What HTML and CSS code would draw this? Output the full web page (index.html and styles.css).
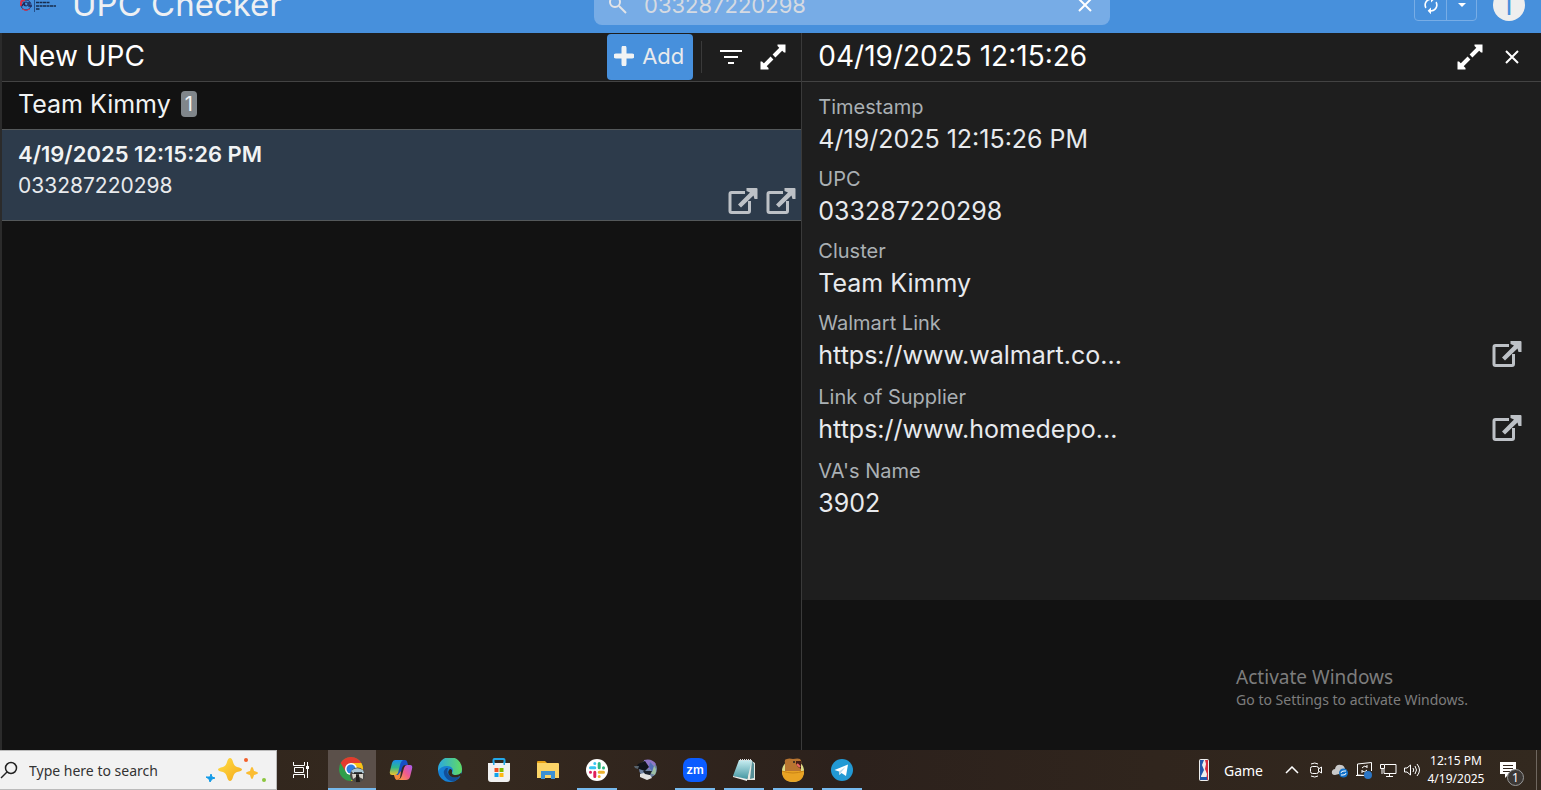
FILE: index.html
```html
<!DOCTYPE html>
<html lang="en">
<head>
  <meta charset="UTF-8">
  <meta name="viewport" content="width=device-width, initial-scale=1.0">
  <title>UPC Checker</title>
  <link rel="stylesheet" href="styles.css">
</head>
<body>

  <!-- shared icons -->
  <svg class="sprite" aria-hidden="true">
    <symbol id="expand" viewBox="0 0 26 26">
      <path d="M17.500 0.500H25.500V8.500H24L17.500 2Z" fill="#fff"/>
      <path d="M0.500 17.500V25.500H8.500V24L2 17.500Z" fill="#fff"/>
      <path d="M23 3L14 12M12 14L3 23" stroke="#fff" stroke-width="4"/>
    </symbol>
    <symbol id="external" viewBox="0 0 30 26">
      <path d="M17 4.500H3.500Q2 4.500 2 6V23Q2 24.500 3.500 24.500H20Q21.500 24.500 21.500 23V13" fill="none" stroke="#bdc1c6" stroke-width="3"/>
      <path d="M18.500 0H28.500Q29.500 0 29.500 1V11H26.500L25.500 7.500L13 19.500L10 16.500L22 4.500L18.500 3Z" fill="#bdc1c6"/>
    </symbol>
  </svg>

  <header class="app-header">
    <svg class="logo" viewBox="0 0 36 14">
      <circle cx="6" cy="7" r="5" fill="none" stroke="#23346b" stroke-width="1"/>
      <path d="M1 8V5Q1 2 5 2" fill="none" stroke="#d8334a" stroke-width="2"/>
      <path d="M2 11Q6 14 10 11" fill="none" stroke="#d8334a" stroke-width="1"/>
      <path d="M2 8L4 5L5 8M9 4V8H12" fill="none" stroke="#1c2a5c" stroke-width="1.500"/>
      <circle cx="6" cy="6" r="2" fill="none" stroke="#1c2a5c"/>
      <path d="M14.500 1V14" stroke="#26508a" stroke-width="1"/>
      <path d="M16 4.500H30M16 8H36M16 11H20" stroke="#172b4b" stroke-width="1.500" stroke-dasharray="3 .5"/>
    </svg>
    <h1>UPC Checker</h1>
    <div class="search">
      <svg viewBox="0 0 20 20" width="20" height="20"><circle cx="7" cy="7" r="5" fill="none" stroke="#e2e4e8" stroke-width="2"/><path d="M11 11L18 18" stroke="#e2e4e8" stroke-width="2"/></svg>
      <input type="text" value="033287220298" aria-label="Search">
      <button type="button" aria-label="Clear search"><svg viewBox="0 0 14 14" width="14" height="14"><path d="M1 1L13 13M13 1L1 13" stroke="#fff" stroke-width="2"/></svg></button>
    </div>
    <div class="sync">
      <button type="button" aria-label="Sync">
        <svg viewBox="0 0 24 24" width="20" height="20" fill="#fff"><path d="M12 6v3l4-4-4-4v3c-4.420 0-8 3.580-8 8 0 1.570.46 3.030 1.240 4.260L6.700 14.800A5.870 5.870 0 0 1 6 12c0-3.310 2.690-6 6-6zm6.760 1.740L17.300 9.200c.44.84.7 1.790.7 2.800 0 3.310-2.690 6-6 6v-3l-4 4 4 4v-3c4.420 0 8-3.580 8-8 0-1.570-.46-3.030-1.240-4.260z"/></svg>
      </button>
      <button type="button" aria-label="Sync options"><svg viewBox="0 0 8 4" width="8" height="4"><path d="M0 0H8L4 4Z" fill="#fff"/></svg></button>
    </div>
    <button type="button" class="avatar">I</button>
  </header>

  <main>
    <section class="list-pane">
      <div class="pane-bar">
        <h2>New UPC</h2>
        <button type="button" class="add"><svg viewBox="0 0 20 20" width="20" height="20"><path d="M10 2V18M2 10H18" stroke="#f1f3f4" stroke-width="5" stroke-linecap="round"/></svg>Add</button>
        <span class="divider"></span>
        <button type="button" class="icon-btn" aria-label="Filter"><svg viewBox="0 0 22 14" width="22" height="14" fill="#fff"><path d="M0 0H22V2H0ZM4 6H18V8H4ZM8 12H14V14H8Z"/></svg></button>
        <button type="button" class="icon-btn" aria-label="Expand"><svg width="26" height="26"><use href="#expand"/></svg></button>
      </div>
      <div class="group">Team Kimmy <span class="count">1</span></div>
      <article class="item">
        <div>
          <h3>4/19/2025 12:15:26 PM</h3>
          <p>033287220298</p>
        </div>
        <div class="item-links">
          <a href="#walmart" aria-label="Walmart Link"><svg width="30" height="26"><use href="#external"/></svg></a>
          <a href="#supplier" aria-label="Link of Supplier"><svg width="30" height="26"><use href="#external"/></svg></a>
        </div>
      </article>
    </section>

    <section class="detail-pane">
      <div class="pane-bar">
        <h2>04/19/2025 12:15:26</h2>
        <button type="button" class="icon-btn" aria-label="Expand"><svg width="26" height="26"><use href="#expand"/></svg></button>
        <button type="button" class="icon-btn" aria-label="Close"><svg viewBox="0 0 14 14" width="14" height="14"><path d="M1 1L13 13M13 1L1 13" stroke="#fff" stroke-width="2"/></svg></button>
      </div>
      <dl class="fields">
        <div class="field"><dt>Timestamp</dt><dd>4/19/2025 12:15:26 PM</dd></div>
        <div class="field"><dt>UPC</dt><dd>033287220298</dd></div>
        <div class="field"><dt>Cluster</dt><dd>Team Kimmy</dd></div>
        <div class="field link"><dt>Walmart Link</dt><dd>https://www.walmart.co...<a href="#walmart" aria-label="Open Walmart Link"><svg width="30" height="26"><use href="#external"/></svg></a></dd></div>
        <div class="field link"><dt>Link of Supplier</dt><dd>https://www.homedepo...<a href="#supplier" aria-label="Open Link of Supplier"><svg width="30" height="26"><use href="#external"/></svg></a></dd></div>
        <div class="field"><dt>VA's Name</dt><dd>3902</dd></div>
      </dl>
    </section>
  </main>

  <div class="watermark">
    <strong>Activate Windows</strong>
    <span>Go to Settings to activate Windows.</span>
  </div>

  <footer class="taskbar">
    <div class="task-search">
      <svg viewBox="0 0 18 18" width="18" height="18"><circle cx="11" cy="7" r="5.500" fill="none" stroke="#222" stroke-width="1.500"/><path d="M7 11L1 17" stroke="#222" stroke-width="1.500"/></svg>
      <input type="text" placeholder="Type here to search" aria-label="Type here to search">
      <svg class="sparkles" viewBox="0 0 62 28" width="62" height="28">
        <defs><linearGradient id="star" x1="0" y1="0" x2="1" y2="1"><stop offset="0" stop-color="#ffdf46"/><stop offset="1" stop-color="#f5a91b"/></linearGradient></defs>
        <path d="M24 2Q26 2 27 6Q28 10 31 11Q36 12 36 13.500Q36 15 31 16Q28 17 27 21Q26 25 24 25Q22 25 21 21Q20 17 17 16Q12 15 12 13.500Q12 12 17 11Q20 10 21 6Q22 2 24 2Z" fill="url(#star)"/>
        <path d="M46 11Q47 11 48 15Q52 16 52 17Q52 18 48 19Q47 23 46 23Q45 23 44 19Q40 18 40 17Q40 16 44 15Q45 11 46 11Z" fill="#fbbd32"/>
        <path d="M5 18L6 21L9 22L6 23L4 26L3 23L0 21L4 21Z" fill="#139be8" stroke="#139be8"/>
        <circle cx="40" cy="4" r="2" fill="#f2602b"/><circle cx="58" cy="24" r="2" fill="#8cc63e"/>
      </svg>
    </div>
    <button type="button" class="app" aria-label="Task View"><svg viewBox="0 0 18 18" width="18" height="18"><path d="M1.500 1V4.500H12.500V1M1.500 17V13.500H12.500V17M2.500 6.500H11.500V11.500H2.500ZM15.500 1V17" fill="none" stroke="#fff"/><path d="M14 5H17V8H14Z" fill="#fff"/></svg></button>

    <nav class="apps" aria-label="Apps">
      <button type="button" class="app active" aria-label="Chrome">
        <svg viewBox="0 0 26 26" width="26" height="26">
          <circle cx="12" cy="12" r="12" fill="#2f9e4b"/>
          <path d="M1.600 6A12 12 0 0 1 22.400 6L12 12L7 15Z" fill="#e33b2e"/>
          <path d="M12 6H22.400A12 12 0 0 1 12 24L17 15Z" fill="#fbc116"/>
          <circle cx="12" cy="12" r="6" fill="#fff"/><circle cx="12" cy="12" r="4.500" fill="#2f7de1"/>
          <circle cx="18.500" cy="18" r="7.500" fill="#4b4a48"/>
          <path d="M12 14Q17 9 24 13L25 16H14Z" fill="#a9c4d2"/><path d="M13 17H17V20L14 22ZM20 17H24V22L20 20Z" fill="#d8d4cc"/><path d="M17 18L20 18L21 25H17Z" fill="#211e1c"/><path d="M15 16H23" stroke="#171717" stroke-width="1.500"/>
        </svg>
      </button>
      <button type="button" class="app" aria-label="Copilot">
        <svg viewBox="0 0 24 24" width="24" height="24">
          <defs>
            <linearGradient id="cp1" x1="0" y1="0" x2="0" y2="1"><stop offset="0" stop-color="#1a8df2"/><stop offset=".5" stop-color="#2fb88c"/><stop offset="1" stop-color="#f3c42a"/></linearGradient>
            <linearGradient id="cp2" x1="1" y1="0" x2="0" y2="1"><stop offset="0" stop-color="#a45cf2"/><stop offset=".5" stop-color="#ef5a8d"/><stop offset="1" stop-color="#fba63a"/></linearGradient>
          </defs>
          <path d="M12 2H16Q18 2 18.500 5L19 7H16Q14 7 13 10L11 18H5Z" fill="#174fc4"/>
          <path d="M6 2H14Q12 3 11 7L9 15Q8 17 6 17H3Q0 17 1 13L3 5Q4 2 6 2Z" fill="url(#cp1)"/>
          <path d="M18 7H21Q24 7 23 11L21 19Q20 22 17 22H9Q12 21 13 17L15 10Q16 7 18 7Z" fill="url(#cp2)"/>
          <path d="M5 17H9L12 13L11 20Q10 22 8 22Q6 22 5 17Z" fill="#f58a3c"/>
        </svg>
      </button>
      <button type="button" class="app" aria-label="Edge">
        <svg viewBox="0 0 24 24" width="24" height="24">
          <defs><linearGradient id="ed1" x1="0" y1="0" x2="1" y2="0"><stop offset="0" stop-color="#2aa8e0"/><stop offset="1" stop-color="#62dc62"/></linearGradient></defs>
          <circle cx="12" cy="12" r="12" fill="#1680d4"/>
          <path d="M0 11A12 12 0 0 1 24 11Q24 17 18 17Q14 17 14 15Q15 14 15 12Q14 8 9 8Q3 8 0 13Z" fill="url(#ed1)"/>
          <path d="M8 10Q3 15 9 21Q13 24 17 23A12 12 0 0 0 22 18Q17 21 12 18Q8 15 10 10Z" fill="#124f99"/>
          <path d="M14 15Q14 17 18 17Q21 17 23 15L25 19L22 18Q17 21 12 18Q9 15 11 12Q12 10 14 12Z" fill="#33291f"/>
        </svg>
      </button>
      <button type="button" class="app" aria-label="Microsoft Store">
        <svg viewBox="0 0 24 24" width="24" height="24">
          <path d="M6.500 6V2Q6.500 1 7.500 1H16.500Q17.500 1 17.500 2V6" fill="none" stroke="#23a9ea" stroke-width="2"/>
          <path d="M1 5H23V21Q23 24 20 24H4Q1 24 1 21Z" fill="#f1f1f1"/><path d="M6 4H7.500V7H6ZM16.500 4H18V7H16.500Z" fill="#23a9ea"/>
          <path d="M7.500 10H11.500V14H7.500Z" fill="#f05022"/><path d="M12.500 10H16.500V14H12.500Z" fill="#7fba00"/><path d="M7.500 15H11.500V19H7.500Z" fill="#12a3ea"/><path d="M12.500 15H16.500V19H12.500Z" fill="#fdb813"/>
        </svg>
      </button>
      <button type="button" class="app" aria-label="File Explorer">
        <svg viewBox="0 0 24 24" width="24" height="24">
          <path d="M1 4Q1 3 2 3H9L11 5H1Z" fill="#e8a317"/><path d="M1 5H22Q23 5 23 6V20H1Z" fill="#fbd467"/>
          <path d="M5 13H19V21H15V17H9V21H5Z" fill="#3b90d4"/>
        </svg>
      </button>
      <button type="button" class="app open" aria-label="Slack">
        <svg viewBox="0 0 24 24" width="24" height="24">
          <circle cx="12" cy="12" r="11" fill="#fff"/>
          <g stroke-width="3" stroke-linecap="round"><path d="M9.800 5.500V5.600M5.500 9.800H9.800" stroke="#36c5f0"/><path d="M14.200 5.500V9.800M18.500 9.800V9.900" stroke="#2eb67d"/><path d="M14.200 14.200H18.500M14.200 18.500V18.600" stroke="#ecb22e"/><path d="M9.800 14.200V18.500M5.500 14.200V14.300" stroke="#e01e5a"/></g>
        </svg>
      </button>
      <button type="button" class="app" aria-label="Camera tool">
        <svg viewBox="0 0 24 24" width="24" height="24">
          <circle cx="14" cy="11" r="9" fill="#6f83a3"/><path d="M10 2Q18 0 22 6L17 12L10 9Z" fill="#8e76c6"/><path d="M18 6Q24 10 21 17L16 15Z" fill="#9dc0a6"/><path d="M16 4L20 8L18 14L15 9Z" fill="#536eb8"/>
          <path d="M4 6L11 3L15 9L11 13L2 10Z" fill="#11141a"/><path d="M0 8L5 8L4 11L1 10Z" fill="#59636c"/><path d="M6 16L10 15L16 17L18 20L13 22L6 19Z" fill="#e1e2e1"/><path d="M9 13L18 13L16 17L11 16Z" fill="#18202a"/>
        </svg>
      </button>
      <button type="button" class="app open" aria-label="Zoom"><span class="zoom">zm</span></button>
      <button type="button" class="app open" aria-label="Notepad">
        <svg viewBox="0 0 24 24" width="24" height="24">
          <defs><linearGradient id="note" x1="0" y1="0" x2="0" y2="1"><stop offset="0" stop-color="#c9eef2"/><stop offset="1" stop-color="#3d929e"/></linearGradient></defs>
          <path d="M18 2L23 5V22L15 22Z" fill="#e6e8e2"/><path d="M20 3L22 6V20L18 21Z" fill="#568f97"/>
          <path d="M7 2H20L15 22L1 18Z" fill="url(#note)"/><path d="M1 18L15 21V23L1 19Z" fill="#eee"/><path d="M8 2H20" stroke="#ddd" stroke-width="2" stroke-dasharray="1 1"/>
        </svg>
      </button>
      <button type="button" class="app open" aria-label="Bear">
        <svg viewBox="0 0 24 24" width="24" height="24">
          <circle cx="12" cy="13" r="11" fill="#dedb87"/><path d="M4 13V5Q3 1 6 1Q8 0 12 1Q17 0 19 1Q21 3 20 6V14Z" fill="#b87430"/>
          <path d="M15 3H20V11Q17 10 15 6Z" fill="#451d16"/><path d="M16 6L19 9" stroke="#ef6a65" stroke-width="2"/><circle cx="13" cy="4" r="1" fill="#222"/>
          <path d="M1 13H23Q23 24 12 24Q1 24 1 13Z" fill="#e9a323"/><path d="M1 13Q12 17 23 13" fill="none" stroke="#c98416"/>
        </svg>
      </button>
      <button type="button" class="app open" aria-label="Telegram">
        <svg viewBox="0 0 24 24" width="24" height="24"><circle cx="12" cy="12" r="11" fill="#2299d4"/><path d="M4.500 12L18 6.500L16 18L11.500 15L9.500 17L9 13.500Z" fill="#fff"/><path d="M9 13.500L15.500 9L11 14.500L9.500 17Z" fill="#b9d8ea"/></svg>
      </button>
    </nav>

    <button type="button" class="news">
      <svg viewBox="0 0 10 22" width="10" height="22"><rect width="10" height="22" rx="2" fill="#eee"/><path d="M1 1H5L3 6L5 11L2 17V21H1Z" fill="#2256ac"/><path d="M6 1H9V21H7L8 15L6 10L7 5Z" fill="#d62b3d"/><path d="M2 18H8V21H2Z" fill="#2256ac"/></svg>
      Game
    </button>
    <div class="tray">
      <button type="button" aria-label="Show hidden icons"><svg viewBox="0 0 14 8" width="14" height="8"><path d="M1 7L7 1L13 7" fill="none" stroke="#fff" stroke-width="1.500"/></svg></button>
      <button type="button" aria-label="Meet Now"><svg viewBox="0 0 16 16" width="16" height="16" fill="none" stroke="#fff"><rect x="2.500" y="4.500" width="8" height="7" rx="2"/><path d="M10.500 7L13.500 5V11L10.500 9M3 2Q7 0 10 2M3 14Q7 16 10 14"/></svg></button>
      <button type="button" aria-label="OneDrive"><svg viewBox="0 0 18 16" width="18" height="16"><path d="M4 13Q0 13 1 9Q2 7 4 7Q5 2 10 3Q13 3 14 7Q17 8 16 12H8Z" fill="#c9c9c9"/><circle cx="12.500" cy="11" r="4.500" fill="#1272ca"/><path d="M10 11Q10 9 13 9H15M15 11Q15 13 12 13H10" fill="none" stroke="#fff"/></svg></button>
      <button type="button" aria-label="Windows Update"><svg viewBox="0 0 18 18" width="18" height="18"><path d="M2.500 3L16.500 1.500V10M10 14.500L2.500 14V3M1 14.500H8" fill="none" stroke="#fff"/><path d="M7 7Q9 4 12 6M12 4V7M12 9Q10 12 7 10M7 12V9" fill="none" stroke="#fff"/><circle cx="13" cy="14" r="4" fill="#2b75c4"/></svg></button>
      <button type="button" aria-label="Network"><svg viewBox="0 0 18 16" width="18" height="16"><path d="M6 2.500H17V11.500H5V7M10.500 12V15M7 14.500H14M3 7V12" fill="none" stroke="#fff"/><path d="M1.500 2.500H5.500V6.500H1.500Z" fill="none" stroke="#fff"/></svg></button>
      <button type="button" aria-label="Volume"><svg viewBox="0 0 18 14" width="18" height="14" fill="none" stroke="#fff"><path d="M1.500 5V9H4L7.500 12V2L4 5ZM10 5Q11.500 7 10 9M12 3Q15 7 12 11M14 1Q19 7 14 13"/></svg></button>
    </div>
    <button type="button" class="clock"><span>12:15 PM</span><span>4/19/2025</span></button>
    <button type="button" class="notices" aria-label="Notifications">
      <svg viewBox="0 0 16 16" width="16" height="16"><path d="M0 0H16V12H9L5 16V12H0Z" fill="#fff"/><path d="M3 3.500H13M3 6.500H13M3 9.500H10" stroke="#33271f"/></svg>
      <span class="badge">1</span>
    </button>
    <span class="show-desktop"></span>
  </footer>

</body>
</html>
```
FILE: styles.css
```css
* {
  box-sizing: border-box;
}

html, body {
  margin: 0;
  height: 100%;
}

body {
  display: flex;
  flex-direction: column;
  overflow: hidden;
  background: #121212;
  color: #e8eaed;
  font-family: Inter, "Liberation Sans", sans-serif;
}

h1, h2, h3, p, dl, dd {
  margin: 0;
  font-weight: 400;
}

button, input {
  border: none;
  padding: 0;
  background: none;
  color: inherit;
  font: inherit;
}

button, a {
  display: flex;
  align-items: center;
  justify-content: center;
  cursor: pointer;
}

svg {
  display: block;
  flex: none;
}

.sprite {
  position: absolute;
  width: 0;
  height: 0;
}

/* Header, scrolled partly out of view */
.app-header {
  display: flex;
  align-items: center;
  flex: none;
  height: 56px;
  margin-top: -23px;
  padding: 0 16px 0 20px;
  background: #4790dc;
}

.logo {
  width: 36px;
  height: 14px;
}

.app-header h1 {
  flex: 1;
  margin-left: 16px;
  padding-bottom: 2px;
  color: #eef0f3;
  font-size: 33px;
}

.search {
  display: flex;
  align-items: center;
  width: 516px;
  height: 40px;
  padding: 0 18px 0 14px;
  border-radius: 8px;
  background: #77ace6;
  color: #d5dae2;
}

.search input {
  flex: 1;
  min-width: 0;
  margin-left: 16px;
  font-size: 22px;
}

.sync {
  display: flex;
  height: 32px;
  margin-left: 304px;
  border: 1px solid #78ade6;
  border-radius: 4px;
}

.sync button {
  width: 31px;
}

.sync button + button {
  width: 30px;
  border-left: 1px solid #78ade6;
}

.avatar {
  width: 32px;
  height: 32px;
  margin-left: 16px;
  border-radius: 50%;
  background: #eee;
  color: #4790dc;
  font-size: 26px;
}

/* Panes */
main {
  display: grid;
  grid-template-columns: 52% 48%;
  flex: 1;
  min-height: 0;
}

.list-pane {
  border-left: 2px solid #2b2b2b;
}

.detail-pane {
  border-left: 1px solid #3a3a3a;
}

.pane-bar {
  display: flex;
  align-items: center;
  height: 49px;
  padding: 0 8px 0 16px;
  border-bottom: 1px solid #434343;
  background: #1e1e1e;
}

.list-pane .pane-bar {
  padding-right: 7px;
}

.pane-bar h2 {
  flex: 1;
  padding-bottom: 2px;
  color: #fff;
  font-size: 28px;
}

.add {
  gap: 8px;
  height: 46px;
  padding: 0 9px 2px 7px;
  border-radius: 4px;
  background: #4790dc;
  font-size: 22px;
}

.divider {
  width: 1px;
  height: 32px;
  margin: 0 8px;
  background: #3a3a3a;
}

.icon-btn {
  width: 42px;
  height: 42px;
}

.group {
  display: flex;
  align-items: center;
  gap: 10px;
  height: 47px;
  padding: 0 16px 4px;
  color: #f1f3f4;
  font-size: 25px;
  line-height: 28px;
}

.count {
  padding: 0 4px;
  border-radius: 4px;
  background: #80868b;
  font-size: 20px;
  line-height: 26px;
}

.item {
  display: flex;
  justify-content: space-between;
  height: 92px;
  padding: 8px 5px 6px 16px;
  border: solid #54585a;
  border-width: 1px 0;
  background: #2d3b4b;
}

.item h3 {
  color: #f1f3f4;
  font-size: 22px;
  font-weight: 600;
  line-height: 32px;
}

.item p {
  font-size: 21px;
  line-height: 32px;
}

.item-links {
  display: flex;
  align-items: flex-end;
  gap: 8px;
}

/* Record details */
.fields {
  padding: 10px 19px 72px 16px;
  background: #1e1e1e;
}

.field {
  height: 72px;
}

.field.link {
  height: 74px;
}

.field dt {
  color: #aab0b4;
  font-size: 20px;
  line-height: 30px;
}

.field dd {
  display: flex;
  justify-content: space-between;
  font-size: 25px;
  line-height: 34px;
}

.field a {
  height: 32px;
}

.watermark {
  position: absolute;
  right: 73px;
  bottom: 80px;
  display: flex;
  flex-direction: column;
  color: #7d7d7d;
  font-family: "Noto Sans", sans-serif;
  font-size: 14px;
  line-height: 20px;
}

.watermark strong {
  font-size: 19px;
  font-weight: 400;
  line-height: 26px;
}

/* Taskbar */
.taskbar {
  display: flex;
  flex: none;
  height: 40px;
  background: linear-gradient(90deg, #2e241b, #35291f 30%, #2c211c 55%, #30251d 75%, #33291f);
  color: #fff;
  font-family: "Noto Sans", sans-serif;
  font-size: 14px;
}

.task-search {
  display: flex;
  align-items: center;
  width: 277px;
  padding: 0 8px 0 0;
  border: 1px solid #bbb;
  border-left: none;
  background: #f2f2f2;
}

.task-search input {
  flex: 1;
  min-width: 0;
  margin-left: 11px;
}

.task-search input::placeholder {
  color: #333;
}

.app {
  width: 48px;
  height: 40px;
  border: solid transparent;
  border-width: 2px 0;
}

.apps {
  display: flex;
  gap: 1px;
  margin-left: 3px;
}

.app.active {
  border-bottom-color: #76b9ed;
  background: #5b504a;
}

.app.open {
  background: linear-gradient(#76b9ed, #76b9ed) center bottom / 40px 2px no-repeat border-box;
}

.zoom {
  width: 24px;
  border-radius: 8px;
  background: #0b5cff;
  font-family: Inter, sans-serif;
  font-size: 12px;
  font-weight: 600;
  line-height: 24px;
}

.news {
  gap: 15px;
  margin-left: auto;
  padding-right: 17px;
}

.tray {
  display: flex;
}

.tray button {
  width: 24px;
}

.clock {
  flex-direction: column;
  width: 64px;
  font-size: 12px;
  line-height: 18px;
}

.notices {
  position: relative;
  width: 48px;
  padding-right: 8px;
}

.badge {
  position: absolute;
  left: 19px;
  top: 19px;
  width: 17px;
  border: 1px solid #999;
  border-radius: 50%;
  background: #3c3835;
  font-size: 12px;
  line-height: 15px;
}

.show-desktop {
  width: 5px;
  border-left: 1px solid #6f675f;
}
```
